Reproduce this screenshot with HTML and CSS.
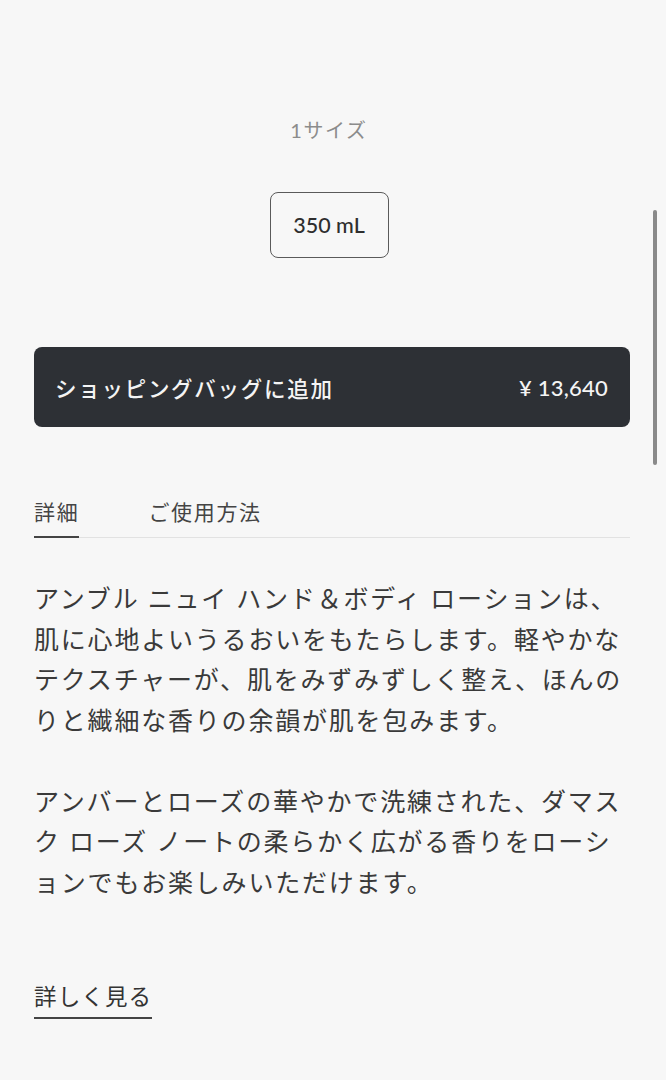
FILE: index.html
```html
<!DOCTYPE html>
<html lang="ja">
<head>
<meta charset="utf-8">
<title>アンブル ニュイ ハンド＆ボディ ローション</title>
<link rel="stylesheet" href="styles.css">
</head>
<body>
<main class="page">
  <section class="sizes">
    <p class="size-label">1サイズ</p>
    <button class="size-option" type="button">350 mL</button>
  </section>

  <button class="add-to-bag" type="button">
    <span class="add-label">ショッピングバッグに追加</span>
    <span class="price">¥ 13,640</span>
  </button>

  <nav class="tabs">
    <a class="tab tab-active">詳細</a>
    <a class="tab">ご使用方法</a>
  </nav>

  <div class="description">
    <p>アンブル ニュイ ハンド＆ボディ ローションは、肌に心地よいうるおいをもたらします。軽やかなテクスチャーが、肌をみずみずしく整え、ほんのりと繊細な香りの余韻が肌を包みます。</p>
    <p>アンバーとローズの華やかで洗練された、ダマスク ローズ ノートの柔らかく広がる香りをローションでもお楽しみいただけます。</p>
    <p>ベルガモットの輝きに、パチョリが重なります。</p>
    <div class="fade"></div>
  </div>

  <a class="more-link">詳しく見る</a>
</main>
<div class="scrollbar"></div>
</body>
</html>
```
FILE: styles.css
```css
html, body {
  margin: 0;
  padding: 0;
  background: #f7f7f7;
}

body {
  font-family: "Lato", "Noto Sans CJK JP", sans-serif;
  color: #363636;
  overflow: hidden;
  height: 1080px;
}

.page {
  width: 596px;
  margin-left: 34px;
  display: flex;
  flex-direction: column;
}

.sizes {
  display: flex;
  flex-direction: column;
  align-items: center;
  padding-top: 116px;
  padding-right: 6px;
}

.size-label {
  margin: 0;
  font-size: 20px;
  line-height: 28px;
  letter-spacing: 0.08em;
  color: #8c8c8c;
}

.size-option {
  margin-top: 48px;
  width: 119px;
  height: 66px;
  border: 1.5px solid #5a5a5a;
  border-radius: 8px;
  background: transparent;
  font-family: "Lato", "Noto Sans CJK JP", sans-serif;
  font-size: 21.5px;
  font-weight: 500;
  color: #2e2e2e;
  padding: 0;
}

.add-to-bag {
  margin-top: 89px;
  height: 80px;
  border: none;
  border-radius: 8px;
  background: #2d3035;
  color: #f4f4f4;
  display: flex;
  align-items: center;
  justify-content: space-between;
  padding: 0 22px 0 21px;
  font-family: "Lato", "Noto Sans CJK JP", sans-serif;
  font-size: 21.5px;
  font-weight: 500;
}

.add-label {
  letter-spacing: 0.08em;
}

.price {
  font-size: 22px;
  font-weight: 500;
  letter-spacing: 0.01em;
}

.tabs {
  margin-top: 71px;
  display: flex;
  gap: 69px;
  border-bottom: 1px solid #e2e2e2;
}

.tab {
  font-size: 21px;
  line-height: 28px;
  letter-spacing: 0.08em;
  color: #444;
  padding-bottom: 10px;
  margin-bottom: -1px;
  border-bottom: 2px solid transparent;
}

.tab-active {
  border-bottom-color: #444;
}

.description {
  position: relative;
  margin-top: 40px;
  height: 376px;
  overflow: hidden;
  font-size: 25px;
  line-height: 40.5px;
  letter-spacing: 1.8px;
  color: #3a3a3a;
  line-break: normal;
}

.description p {
  margin: 0 0 40.5px 0;
}

.fade {
  position: absolute;
  left: 0;
  right: 0;
  bottom: 0;
  height: 60px;
  background: linear-gradient(to bottom, rgba(247,247,247,0), #f7f7f7 70%);
}

.more-link {
  align-self: flex-start;
  margin-top: 28px;
  font-size: 22.5px;
  line-height: 30px;
  letter-spacing: 0.05em;
  color: #333;
  padding-bottom: 5px;
  border-bottom: 2px solid #444;
}

.scrollbar {
  position: fixed;
  top: 210px;
  left: 653px;
  width: 4px;
  height: 255px;
  border-radius: 2px;
  background: #8a8a8a;
}
```
